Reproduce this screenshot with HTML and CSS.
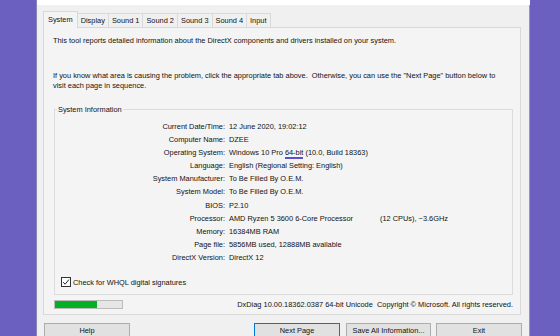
FILE: index.html
```html
<!DOCTYPE html>
<html lang="en">

<head>
    <meta charset="UTF-8">
    <meta name="viewport" content="width=device-width, initial-scale=1.0">
    <title>DirectX Diagnostic Tool</title>
    <link rel="stylesheet" href="styles.css">
</head>

<body>
    <div class="window">
        <div class="titlebar"></div>

        <div class="tabs">
            <div class="tab active">System</div>
            <div class="tab">Display</div>
            <div class="tab">Sound 1</div>
            <div class="tab">Sound 2</div>
            <div class="tab">Sound 3</div>
            <div class="tab">Sound 4</div>
            <div class="tab">Input</div>
        </div>

        <div class="panel">
            <p class="intro">This tool reports detailed information about the DirectX components and drivers installed on your system.</p>
            <p class="intro second">If you know what area is causing the problem, click the appropriate tab above.&nbsp; Otherwise, you can use the "Next Page" button below to<br>visit each page in sequence.</p>

            <fieldset class="group">
                <legend>System Information</legend>
                <div class="info-grid">
                    <div class="label">Current Date/Time:</div>
                    <div class="value">12 June 2020, 19:02:12</div>
                    <div class="label">Computer Name:</div>
                    <div class="value">DZEE</div>
                    <div class="label">Operating System:</div>
                    <div class="value">Windows 10 Pro <span class="mark">64-bit</span> (10.0, Build 18363)</div>
                    <div class="label">Language:</div>
                    <div class="value">English (Regional Setting: English)</div>
                    <div class="label">System Manufacturer:</div>
                    <div class="value">To Be Filled By O.E.M.</div>
                    <div class="label">System Model:</div>
                    <div class="value">To Be Filled By O.E.M.</div>
                    <div class="label">BIOS:</div>
                    <div class="value">P2.10</div>
                    <div class="label">Processor:</div>
                    <div class="value"><span class="cpu">AMD Ryzen 5 3600 6-Core Processor</span>(12 CPUs), ~3.6GHz</div>
                    <div class="label">Memory:</div>
                    <div class="value">16384MB RAM</div>
                    <div class="label">Page file:</div>
                    <div class="value">5856MB used, 12888MB available</div>
                    <div class="label">DirectX Version:</div>
                    <div class="value">DirectX 12</div>
                </div>

                <label class="check">
                    <svg class="checkbox" width="10" height="10" viewBox="0 0 10 10">
                        <rect x="0.5" y="0.5" width="9" height="9" fill="#fff" stroke="#333"/>
                        <path d="M2.2 5.2 L4.1 7.2 L7.9 2.6" fill="none" stroke="#222" stroke-width="1"/>
                    </svg>
                    Check for WHQL digital signatures
                </label>
            </fieldset>

            <div class="status">
                <div class="progress">
                    <div class="progress-fill" style="width: 63%"></div>
                </div>
                <div class="copyright">DxDiag 10.00.18362.0387 64-bit Unicode&nbsp; Copyright © Microsoft. All rights reserved.</div>
            </div>
        </div>

        <div class="buttons">
            <button class="btn">Help</button>
            <button class="btn default push">Next Page</button>
            <button class="btn save">Save All Information...</button>
            <button class="btn exit">Exit</button>
        </div>
    </div>
</body>

</html>
```

FILE: styles.css
```css
* {
    margin: 0;
    padding: 0;
    box-sizing: border-box;
}

body {
    font-family: 'Liberation Sans', Arial, sans-serif;
    font-size: 7.4px;
    color: #111;
    background: #6b60c0;
    width: 560px;
    height: 336px;
    overflow: hidden;
}

.window {
    margin-left: 36px;
    width: 494px;
    height: 336px;
    background: #f0f0f0;
    border-left: 1px solid #8a86b0;
    border-right: 1px solid #9b9b9b;
    padding-left: 6px;
}

.titlebar {
    height: 5px;
    margin-left: -6px;
    margin-right: -1px;
    background: #fff;
}

/* tab strip */
.tabs {
    display: flex;
    align-items: flex-start;
    height: 14px;
    margin-top: 8px;
}

.tab {
    height: 14px;
    line-height: 13px;
    padding: 0 3px;
    border: 1px solid #d9d9d9;
    border-bottom: none;
    margin-right: -1px;
    background: #f0f0f0;
}

.tab.active {
    position: relative;
    z-index: 1;
    height: 17px;
    margin-top: -2px;
    padding: 1px 4px 0;
    background: #f4f4f4;
}

.panel {
    width: 478px;
    height: 288px;
    border: 1px solid #d9d9d9;
    background: #f4f4f4;
    padding: 8px 0 0 9px;
}

.intro {
    line-height: 10.5px;
    white-space: nowrap;
}

.intro.second {
    margin-top: 24px;
}

/* system information group */
.group {
    width: 459px;
    margin: 13px 0 0 1px;
    padding: 0 0 5px;
    border: 1px solid #dcdcdc;
}

.group legend {
    margin-left: 2px;
    padding: 0 1px;
    line-height: 10px;
}

.info-grid {
    display: grid;
    grid-template-columns: 170px 1fr;
    column-gap: 4px;
    grid-auto-rows: 13.2px;
    line-height: 13.2px;
    margin-top: 5px;
    white-space: nowrap;
}

.label {
    text-align: right;
}

.mark {
    border-bottom: 2px solid #5a4fcf;
}

.cpu {
    display: inline-block;
    width: 151px;
}

.check {
    display: flex;
    align-items: center;
    gap: 2px;
    height: 13px;
    margin: 11px 0 0 6px;
}

.checkbox {
    display: block;
}

/* bottom status line */
.status {
    display: flex;
    align-items: center;
    justify-content: space-between;
    width: 459px;
    height: 10px;
    margin: 5px 0 0 1px;
}

.progress {
    width: 69px;
    height: 9px;
    border: 1px solid #bcbcbc;
    background: #e6e6e6;
}

.progress-fill {
    height: 100%;
    background: #06b025;
}

.copyright {
    white-space: nowrap;
}

/* dialog buttons */
.buttons {
    display: flex;
    width: 478px;
    margin: 8px 0 0 1px;
}

.btn {
    width: 86px;
    height: 15px;
    font-family: inherit;
    font-size: 7.4px;
    color: #111;
    background: #e1e1e1;
    border: 1px solid #adadad;
}

.btn.default {
    border-color: #0078d7;
}

.btn.push {
    margin-left: auto;
}

.btn.save {
    width: 85px;
    margin-left: 6px;
}

.btn.exit {
    margin-left: 5px;
}
```
